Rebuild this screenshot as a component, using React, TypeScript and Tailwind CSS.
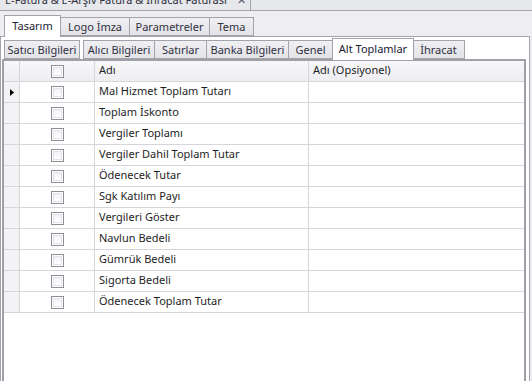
import React from "react";

const rows = [
  "Mal Hizmet Toplam Tutarı",
  "Toplam İskonto",
  "Vergiler Toplamı",
  "Vergiler Dahil Toplam Tutar",
  "Ödenecek Tutar",
  "Sgk Katılım Payı",
  "Vergileri Göster",
  "Navlun Bedeli",
  "Gümrük Bedeli",
  "Sigorta Bedeli",
  "Ödenecek Toplam Tutar",
];

function Check() {
  return (
    <div className="w-[13px] h-[13px] border border-[#8e8f96] bg-white p-[1px]">
      <div className="w-full h-full border border-[#e2e3e8] bg-[linear-gradient(#f2f3f6,#ffffff)]" />
    </div>
  );
}

function OuterTab({ label, active, w }: { label: string; active?: boolean; w: string }) {
  if (active)
    return (
      <div className={`${w} h-[22px] -mb-[1px] pb-[2px] relative z-10 bg-white border border-b-0 border-[#a3a3ab] flex items-center justify-center text-[#202030]`}>
        {label}
      </div>
    );
  return (
    <div className={`${w} h-[19px] -ml-[1px] pb-[1px] bg-[linear-gradient(#f0f0f3,#e3e3e8)] border border-[#a3a3ab] flex items-center justify-center text-[#303040]`}>
      {label}
    </div>
  );
}

export default function App() {
  return (
    <div className="w-[532px] h-[381px] overflow-hidden bg-[#eeeef2] flex flex-col font-['Noto_Sans',sans-serif] text-[11px] leading-none">
      <div className="h-[10px] flex bg-[#e7e8ec] border-b border-[#a3a3ab] box-content shrink-0">
        <div className="w-[251px] border-r border-[#a3a3ab] relative overflow-hidden">
          <span className="absolute left-[5px] top-[-6px] text-[#303040] whitespace-nowrap leading-[11px]">
            E-Fatura &amp; E-Arşiv Fatura &amp; İhracat Faturası
          </span>
          <span className="absolute left-[237px] top-[-6px] text-[#505060] leading-[11px]">✕</span>
        </div>
      </div>
      <div className="flex items-end pl-[4px] h-[25px] shrink-0">
        <OuterTab label="Tasarım" active w="w-[57px]" />
        <OuterTab label="Logo İmza" w="w-[70px]" />
        <OuterTab label="Parametreler" w="w-[81px]" />
        <OuterTab label="Tema" w="w-[45px]" />
      </div>
      <div className="w-[530px] h-[380px] shrink-0 bg-white border border-[#a3a3ab] flex flex-col">
        <div className="flex items-end pl-[4px] h-[22px] shrink-0">
          <OuterTab label="Satıcı Bilgileri" w="w-[76px]" />
          <div className="w-[4px]" />
          <OuterTab label="Alıcı Bilgileri" w="w-[72px]" />
          <OuterTab label="Satırlar" w="w-[53px]" />
          <OuterTab label="Banka Bilgileri" w="w-[83px]" />
          <OuterTab label="Genel" w="w-[45px]" />
          <div className="-ml-[1px]">
            <OuterTab label="Alt Toplamlar" active w="w-[82px]" />
          </div>
          <div className="-ml-[1px]">
            <OuterTab label="İhracat" w="w-[53px]" />
          </div>
        </div>
        <div className="ml-[1px] w-[524px] flex-1 border-2 border-b-0 border-[#a0a0a8] bg-white text-[#1e1e1e]">
          <div className="flex h-[21px] border-b border-[#d6d6da] bg-[linear-gradient(#f7f7f9,#eeeef2)]">
            <div className="w-[16px] border-r border-[#d6d6da]" />
            <div className="w-[75px] border-r border-[#d6d6da] flex items-center justify-center">
              <Check />
            </div>
            <div className="w-[214px] border-r border-[#d6d6da] flex items-center pl-[4px] pb-[3px]">Adı</div>
            <div className="flex-1 flex items-center pl-[4px] pb-[3px]">Adı (Opsiyonel)</div>
          </div>
          {rows.map((r, i) => (
            <div key={i} className="flex h-[21px] border-b border-[#d6d6da]">
              <div className="w-[16px] border-r border-[#d6d6da] bg-[#f3f3f6] flex items-center justify-center">
                {i === 0 && (
                  <svg width="4" height="7" viewBox="0 0 4 7">
                    <path d="M0 0 L4 3.5 L0 7 Z" fill="#000" />
                  </svg>
                )}
              </div>
              <div className="w-[75px] border-r border-[#d6d6da] flex items-center justify-center">
                <Check />
              </div>
              <div className="w-[214px] border-r border-[#d6d6da] flex items-center pl-[4px] pb-[3px] whitespace-nowrap">{r}</div>
              <div className="flex-1" />
            </div>
          ))}
        </div>
      </div>
    </div>
  );
}
